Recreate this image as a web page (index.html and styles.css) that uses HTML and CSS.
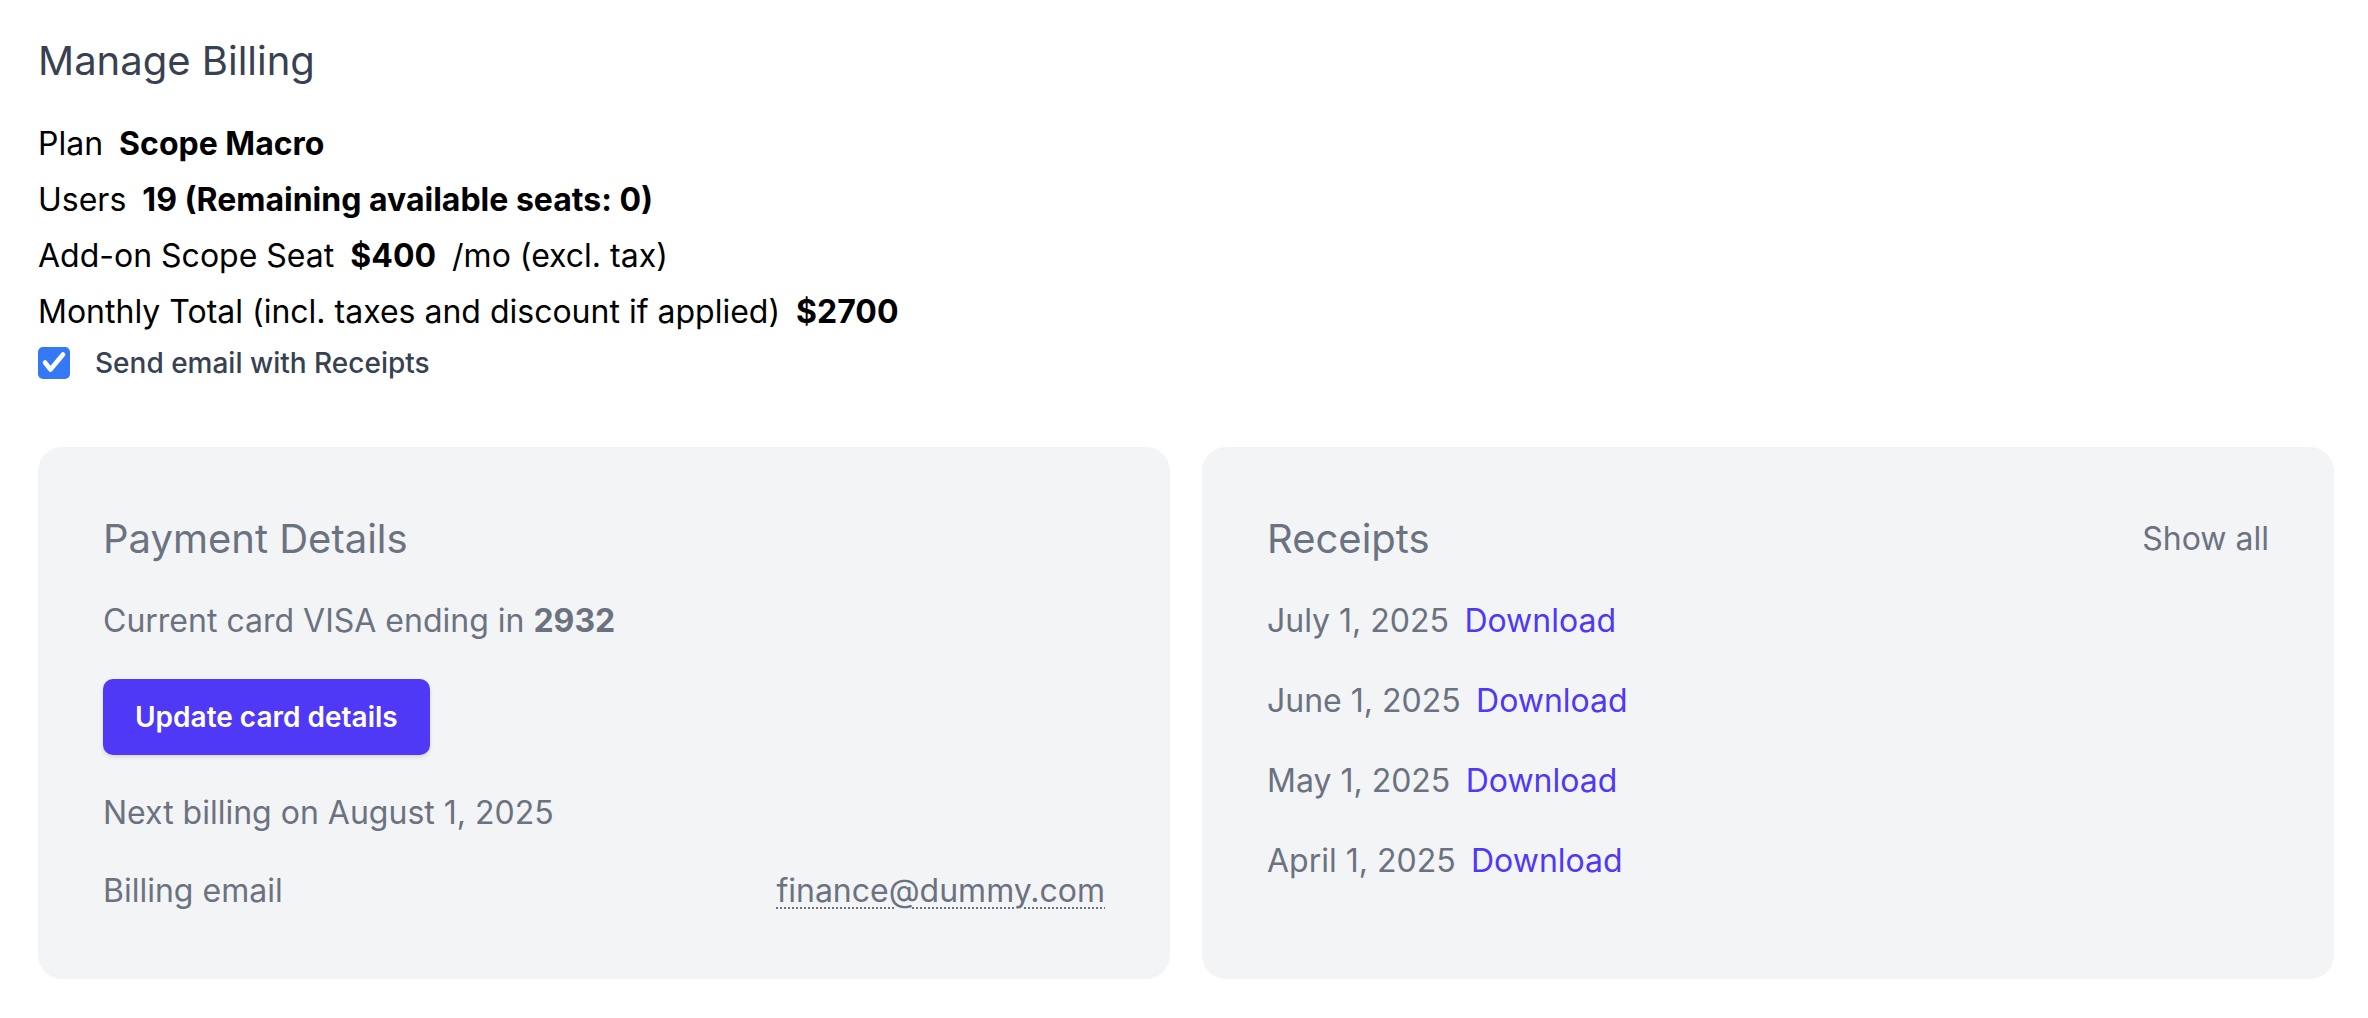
FILE: index.html
```html
<!DOCTYPE html>
<html lang="en">
<head>
<meta charset="utf-8">
<title>Manage Billing</title>
<link rel="stylesheet" href="styles.css">
</head>
<body>
<main class="page">
  <h1 class="title">Manage Billing</h1>
  <ul class="summary">
    <li>Plan <strong>Scope Macro</strong></li>
    <li>Users <strong>19 (Remaining available seats: 0)</strong></li>
    <li>Add-on Scope Seat <strong>$400</strong> /mo (excl. tax)</li>
    <li>Monthly Total (incl. taxes and discount if applied) <strong>$2700</strong></li>
  </ul>
  <label class="check-row">
    <span class="checkbox">
      <svg viewBox="0 0 32 32" width="32" height="32" aria-hidden="true"><path d="M7 15.5 L12.5 22.5 L25 7.5" fill="none" stroke="#fff" stroke-width="4.6" stroke-linecap="round" stroke-linejoin="round"/></svg>
    </span>
    <span class="check-label">Send email with Receipts</span>
  </label>

  <section class="cards">
    <div class="card">
      <h2 class="card-title">Payment Details</h2>
      <p class="card-text">Current card VISA ending in <strong>2932</strong></p>
      <div><button class="btn" type="button">Update card details</button></div>
      <p class="card-text">Next billing on August 1, 2025</p>
      <div class="row-between card-text">
        <span>Billing email</span>
        <span class="email">finance@dummy.com</span>
      </div>
    </div>
    <div class="card">
      <div class="row-between head">
        <h2 class="card-title">Receipts</h2>
        <span class="show-all">Show all</span>
      </div>
      <ul class="receipts">
        <li>July 1, 2025 <a class="dl" href="#">Download</a></li>
        <li>June 1, 2025 <a class="dl" href="#">Download</a></li>
        <li>May 1, 2025 <a class="dl" href="#">Download</a></li>
        <li>April 1, 2025 <a class="dl" href="#">Download</a></li>
      </ul>
    </div>
  </section>
</main>
</body>
</html>
```

FILE: styles.css
```css
* { box-sizing: border-box; }
html, body { margin: 0; padding: 0; background: #fff; }
body {
  font-family: Inter, "Noto Sans", "Liberation Sans", sans-serif;
  color: #000;
}
.page {
  padding: 37px 34px 0 38px;
}
.title {
  margin: 0;
  font-size: 40px;
  line-height: 47px;
  font-weight: 400;
  color: #374151;
}
.summary {
  list-style: none;
  margin: 32px 0 0;
  padding: 0;
  font-size: 32px;
  line-height: 56px;
}
.summary strong { font-weight: 700; margin: 0 0.22em; }
.check-row {
  display: flex;
  align-items: center;
  gap: 25px;
  margin-top: 7px;
  height: 32px;
}
.checkbox {
  width: 32px;
  height: 32px;
  border-radius: 5px;
  background: #3478f6;
  display: flex;
}
.check-label {
  font-size: 28px;
  line-height: 32px;
  font-weight: 500;
  color: #374151;
}
.cards {
  margin-top: 68px;
  display: grid;
  grid-template-columns: 1132px 1132px;
  gap: 32px;
}
.card {
  background: #f3f4f6;
  border-radius: 24px;
  padding: 68px 65px 68px;
  display: flex;
  flex-direction: column;
  gap: 38px;
  color: #6b7280;
}
.card-title {
  margin: 0;
  font-size: 40px;
  line-height: 48px;
  font-weight: 400;
  color: #6b7280;
}
.card-text {
  margin: 0;
  font-size: 32px;
  line-height: 40px;
}
.card-text strong { font-weight: 700; }
.btn {
  font-family: inherit;
  font-size: 28px;
  font-weight: 600;
  color: #fff;
  background: #4f39f6;
  border: 0;
  border-radius: 10px;
  height: 76px;
  padding: 0 32px;
  box-shadow: 0 2px 4px rgba(0,0,0,0.12);
}
.row-between {
  display: flex;
  justify-content: space-between;
  align-items: center;
}
.email {
  text-decoration: underline dotted #6b7280;
  text-decoration-thickness: 2px;
  text-underline-offset: 5px;
}
.show-all {
  font-size: 32px;
  line-height: 40px;
  color: #6b7280;
}
.receipts {
  list-style: none;
  margin: 0;
  padding: 0;
  display: flex;
  flex-direction: column;
  gap: 40px;
  font-size: 32px;
  line-height: 40px;
}
.dl {
  color: #4f39f6;
  text-decoration: none;
  margin-left: 0.2em;
}
```
